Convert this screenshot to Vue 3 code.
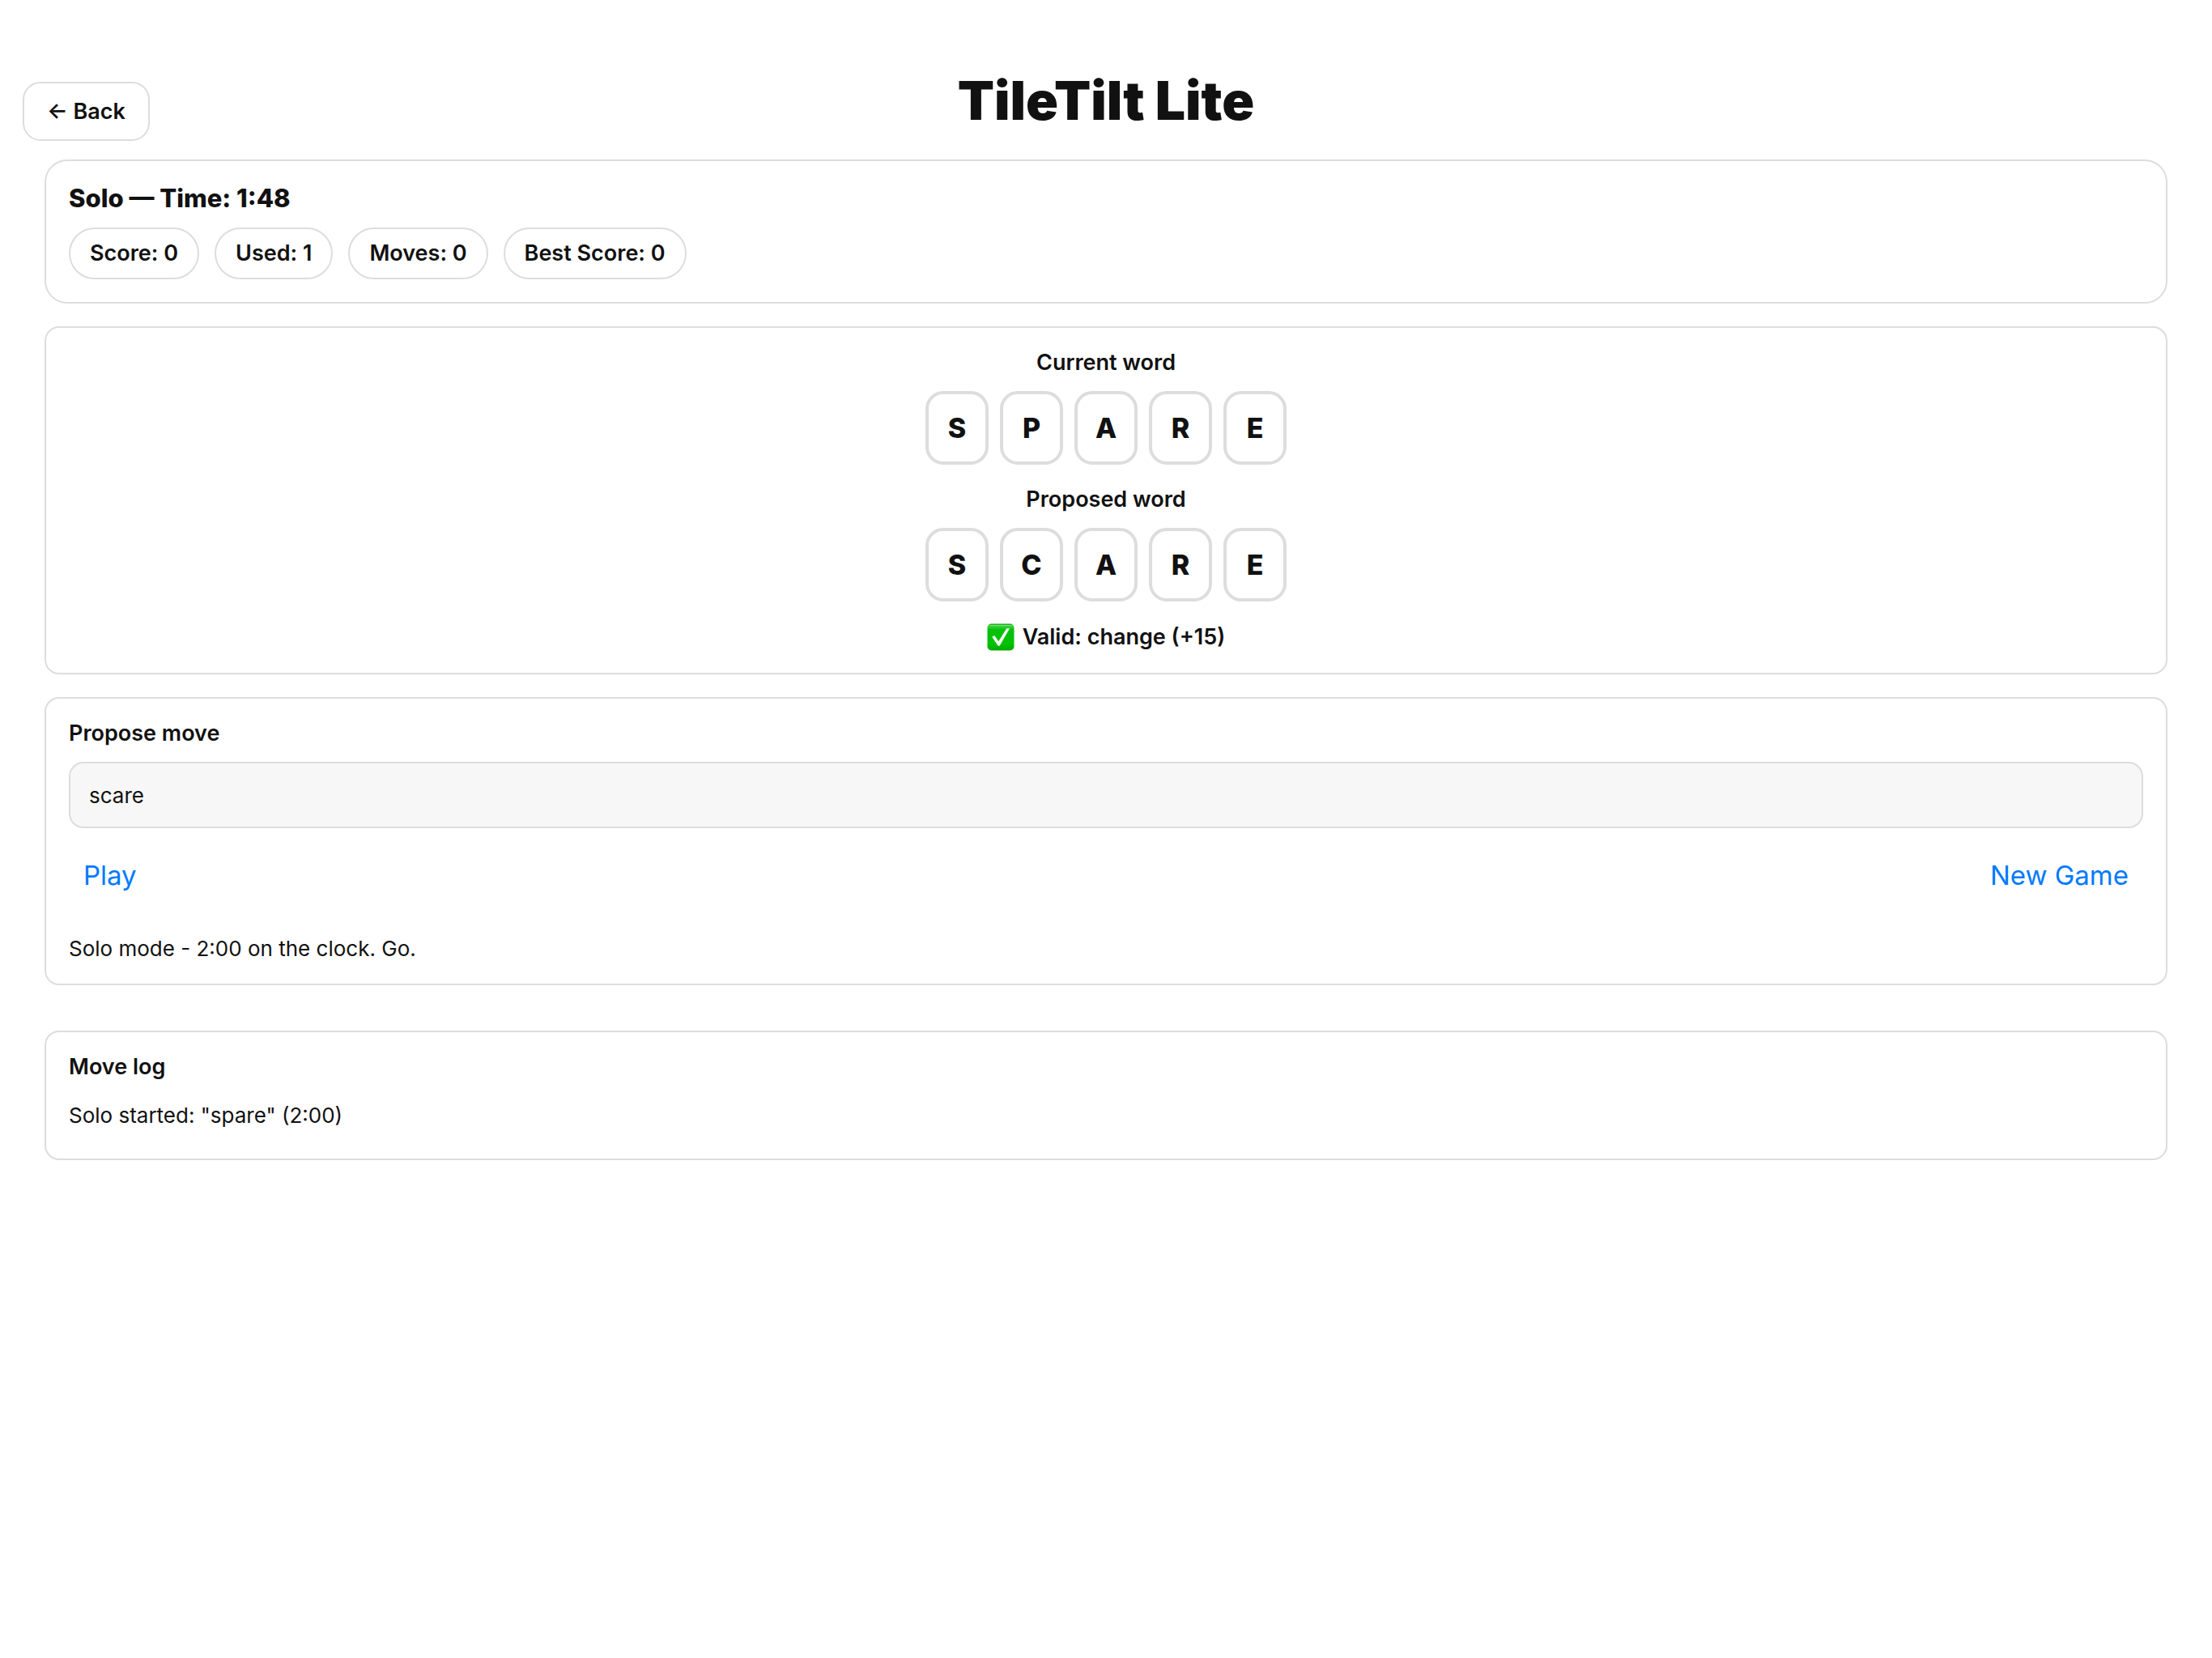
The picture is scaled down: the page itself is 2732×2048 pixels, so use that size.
<script setup>
import { computed, ref } from 'vue'

const current = 'SPARE'
const proposal = ref('scare')
const proposed = computed(() => proposal.value.toUpperCase())
const stats = ['Score: 0', 'Used: 1', 'Moves: 0', 'Best Score: 0']
const log = ['Solo started: "spare" (2:00)']
</script>

<template>
  <div class="screen">
    <header class="header">
      <button class="back" type="button">← Back</button>
      <h1 class="title">TileTilt Lite</h1>
    </header>

    <main class="content">
      <section class="card summary">
        <h2 class="status">Solo — Time: 1:48</h2>
        <ul class="stats">
          <li v-for="stat in stats" :key="stat" class="stat">{{ stat }}</li>
        </ul>
      </section>

      <section class="card board">
        <div class="word">
          <h3 class="label">Current word</h3>
          <div class="tiles">
            <span v-for="(letter, i) in current" :key="i" class="tile">{{ letter }}</span>
          </div>
        </div>
        <div class="word">
          <h3 class="label">Proposed word</h3>
          <div class="tiles">
            <span v-for="(letter, i) in proposed" :key="i" class="tile">{{ letter }}</span>
          </div>
        </div>
        <p class="verdict">
          <svg class="check" viewBox="0 0 34 34" aria-hidden="true">
            <defs>
              <linearGradient id="check-fill" x1="0" y1="0" x2="0" y2="1">
                <stop offset="0" stop-color="#13a413" />
                <stop offset="0.1" stop-color="#35d235" />
                <stop offset="0.22" stop-color="#0abf0d" />
                <stop offset="0.75" stop-color="#00c400" />
                <stop offset="1" stop-color="#00a800" />
              </linearGradient>
            </defs>
            <rect x="0.5" y="0.5" width="33" height="33" rx="5" fill="url(#check-fill)" />
            <path d="M3.500 2.600H30.500" stroke="#7be87b" stroke-width="1" stroke-linecap="round" />
            <path d="M6.200 16.800L9.200 14.900L14.300 22.200L24.200 6.300L28 6.300L15.600 27.800L13.800 27.800Z" fill="#fff" />
          </svg>
          <span>Valid: change (+15)</span>
        </p>
      </section>

      <form class="card" @submit.prevent>
        <label class="label" for="move">Propose move</label>
        <input id="move" v-model="proposal" class="field" type="text" autocomplete="off" spellcheck="false" />
        <div class="actions">
          <button class="action" type="submit">Play</button>
          <button class="action" type="button">New Game</button>
        </div>
        <p class="text">Solo mode - 2:00 on the clock. Go.</p>
      </form>

      <section class="card log">
        <h3 class="label">Move log</h3>
        <ul class="entries">
          <li v-for="entry in log" :key="entry" class="text">{{ entry }}</li>
        </ul>
      </section>
    </main>
  </div>
</template>

<style>
body {
  margin: 0;
  background: #fff;
}
</style>

<style scoped>
.screen {
  box-sizing: border-box;
  min-height: 100vh;
  padding-top: 74px;
  background: #fff;
  color: #111;
  font-family: Inter, "Liberation Sans", sans-serif;
  font-size: 26px;
  line-height: 30px;
}

.screen *,
.screen *::before {
  box-sizing: border-box;
}

h1,
h2,
h3,
p,
ul {
  margin: 0;
  padding: 0;
  list-style: none;
}

button,
input {
  margin: 0;
  color: inherit;
  font: inherit;
}

button {
  cursor: pointer;
}

.header {
  display: grid;
  grid-template-columns: 1fr auto 1fr;
  align-items: end;
  padding: 0 28px;
}

.back {
  justify-self: start;
  padding: 18px 28px;
  border: 2px solid #ddd;
  border-radius: 22px;
  background: #fff;
  font-size: 27px;
  font-weight: 600;
  line-height: 33px;
}

.title {
  font-size: 66px;
  font-weight: 900;
  line-height: 100px;
}

.content {
  display: flex;
  flex-direction: column;
  gap: 28px;
  padding: 23px 55px 55px;
}

.card {
  display: flex;
  flex-direction: column;
  padding: 28px;
  border: 2px solid #ddd;
  border-radius: 18px;
}

.summary {
  gap: 18px;
  border-radius: 28px;
}

.status {
  font-size: 31px;
  font-weight: 800;
  line-height: 36px;
}

.stats {
  display: flex;
  flex-wrap: wrap;
  gap: 19px;
}

.stat {
  padding: 14px 24px;
  border: 2px solid #ddd;
  border-radius: 32px;
  font-size: 27px;
  font-weight: 600;
  line-height: 32px;
}

.board {
  align-items: center;
  gap: 28px;
}

.word {
  display: flex;
  flex-direction: column;
  align-items: center;
  gap: 20px;
}

.label {
  font-size: 27px;
  font-weight: 600;
}

.tiles {
  display: flex;
  gap: 14px;
}

.tile {
  display: flex;
  align-items: center;
  justify-content: center;
  width: 78px;
  height: 91px;
  border: 4px solid #ddd;
  border-radius: 22px;
  font-size: 34px;
  font-weight: 800;
}

.verdict {
  display: flex;
  align-items: center;
  gap: 10px;
  font-size: 27px;
  font-weight: 600;
  line-height: 32px;
}

.check {
  width: 34px;
  height: 34px;
  margin: -1px 0;
}

.field {
  width: 100%;
  height: 82px;
  margin-top: 20px;
  padding: 0 23px;
  border: 2px solid #ddd;
  border-radius: 18px;
  outline: none;
  background: #f7f7f7;
}

.actions {
  display: flex;
  justify-content: space-between;
  margin: 18px 0 36px;
}

.action {
  padding: 20px 18px;
  border: 0;
  background: none;
  color: #007aff;
  font-size: 33px;
  line-height: 40px;
}

.log {
  gap: 30px;
  margin-top: 28px;
}

.entries {
  padding-bottom: 10px;
}
</style>
